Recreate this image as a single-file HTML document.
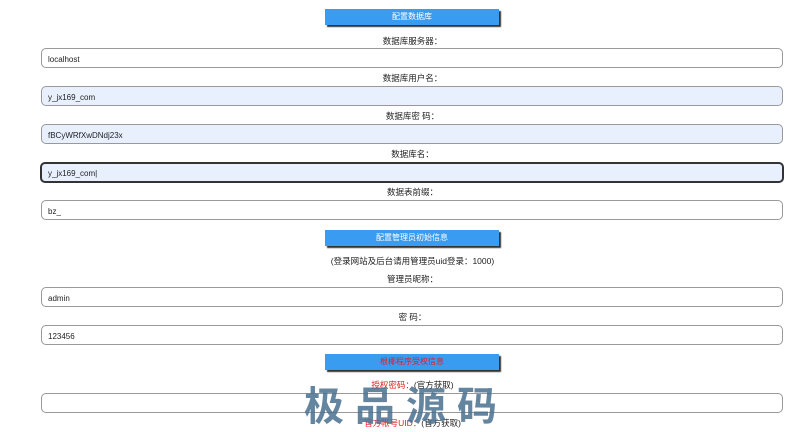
<!DOCTYPE html>
<html><head><meta charset="utf-8"><style>
body{margin:0;width:800px;height:428px;background:#fff;position:relative;overflow:hidden;font-family:"Liberation Sans","Noto Sans CJK SC",sans-serif;font-size:9px;color:#222}
.btn{position:absolute;left:325px;width:174px;height:16px;background:#3a9cf0;color:#fff;text-align:center;line-height:16px;font-size:8px;box-shadow:2px 2px 1px #333}
.lb{position:absolute;left:0;width:825px;text-align:center;font-size:8.5px;line-height:10px}
.in{position:absolute;left:41px;height:18px;border:1px solid #999;border-radius:5px;background:#fff;font-size:8px;line-height:21px;padding-left:6px;box-sizing:content-box;width:734px}
.bl{background:#e8f0fe}
.red{color:#e02020}
.wm{position:absolute;left:304px;top:381px;font-size:40px;font-weight:bold;color:#4a7090;opacity:.85;letter-spacing:11px;line-height:44px;font-family:"Noto Sans CJK SC",sans-serif}
</style></head><body>
<div class="btn" style="top:9px">配置数据库</div>
<div class="lb" style="top:36px">数据库服务器：</div>
<div class="in" style="top:48px">localhost</div>
<div class="lb" style="top:73px">数据库用户名：</div>
<div class="in bl" style="top:86px">y_jx169_com</div>
<div class="lb" style="top:111px">数据库密 码：</div>
<div class="in bl" style="top:124px">fBCyWRfXwDNdj23x</div>
<div class="lb" style="top:149px">数据库名：</div>
<div class="in bl" style="top:162px;border:2px solid #333;height:17px;left:40px;line-height:20px">y_jx169_com|</div>
<div class="lb" style="top:187px">数据表前缀：</div>
<div class="in" style="top:200px">bz_</div>
<div class="btn" style="top:230px">配置管理员初始信息</div>
<div class="lb" style="top:256px">(登录网站及后台请用管理员uid登录：1000)</div>
<div class="lb" style="top:274px">管理员昵称：</div>
<div class="in" style="top:287px">admin</div>
<div class="lb" style="top:312px">密 码：</div>
<div class="in" style="top:325px">123456</div>
<div class="btn red" style="top:354px;color:#e02020">根椰程序受权信息</div>
<div class="lb" style="top:380px"><span class="red">授权密码：</span>(官方获取)</div>
<div class="in" style="top:393px"></div>
<div class="lb" style="top:418px"><span class="red">官方帐号UID：</span>(官方获取)</div>
<div class="wm">极品源码</div>
</body></html>
